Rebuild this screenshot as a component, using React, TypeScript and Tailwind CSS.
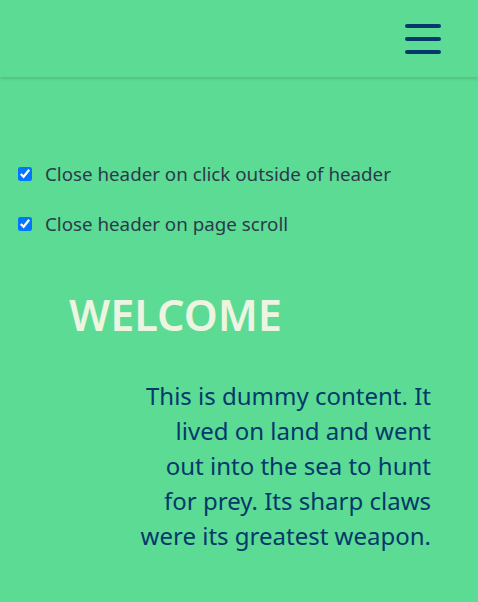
import React, { useState } from 'react';

const App: React.FC = () => {
  const [clickOutside, setClickOutside] = useState(true);
  const [onScroll, setOnScroll] = useState(true);

  return (
    <div className="min-h-[602px] bg-[#5cdb95] font-['Noto_Sans',sans-serif]">
      <header className="h-[77px] flex items-center justify-end pr-[37px] shadow-[0_2px_3px_rgba(0,0,0,0.12)]">
        <button className="flex flex-col gap-[9px] w-[36px] py-[1px]">
          <span className="block h-[4px] rounded-full bg-[#05386b]" />
          <span className="block h-[4px] rounded-full bg-[#05386b]" />
          <span className="block h-[4px] rounded-full bg-[#05386b]" />
        </button>
      </header>

      <div className="pt-[85px] pl-[18px] flex flex-col gap-[26px] text-[18.75px] text-[#2b3a4a]">
        <label className="flex items-center gap-[13px] h-[24px]">
          <input
            type="checkbox"
            checked={clickOutside}
            onChange={() => setClickOutside(!clickOutside)}
            className="w-[14px] h-[14px] accent-[#0075ff]"
          />
          Close header on click outside of header
        </label>
        <label className="flex items-center gap-[13px] h-[24px]">
          <input
            type="checkbox"
            checked={onScroll}
            onChange={() => setOnScroll(!onScroll)}
            className="w-[14px] h-[14px] accent-[#0075ff]"
          />
          Close header on page scroll
        </label>
      </div>

      <main className="px-[47px] pt-[49px]">
        <h1 className="pl-[22px] text-[43.2px] font-semibold leading-[60px] text-[#edf5e1]">WELCOME</h1>
        <p className="mt-[33px] ml-auto w-[292px] text-right text-[24px] leading-[35px] text-[#05386b]">
          This is dummy content. It lived on land and went out into the sea to hunt for prey. Its sharp claws were its greatest weapon.
        </p>
      </main>
    </div>
  );
};

export default App;
